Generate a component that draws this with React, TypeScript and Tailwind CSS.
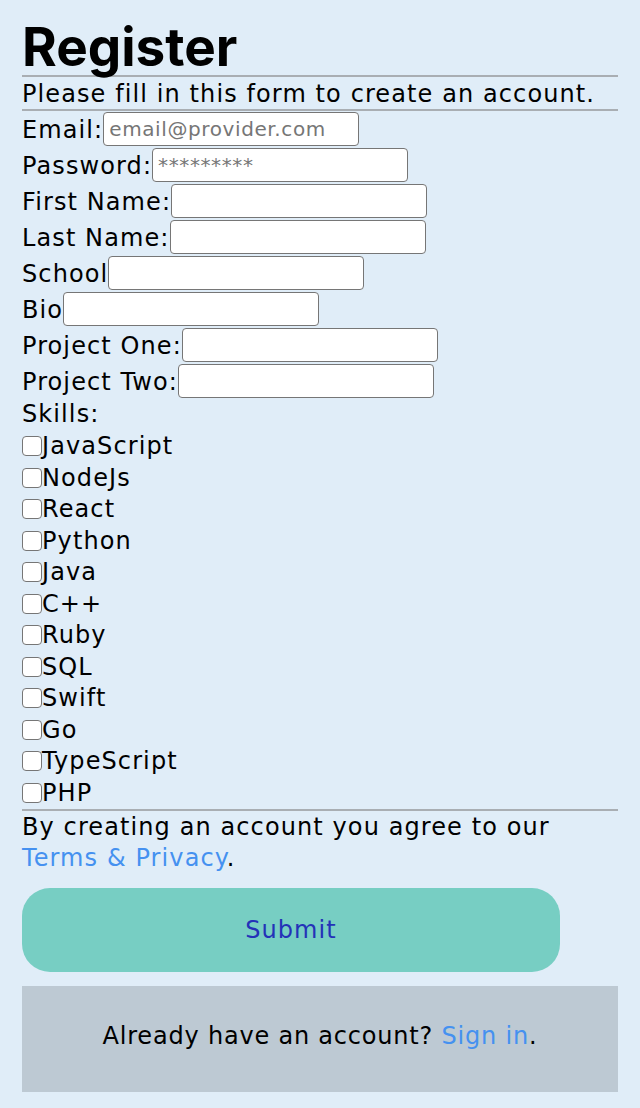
import React from 'react';

const fields: { label: string; placeholder?: string }[] = [
  { label: 'Email:', placeholder: 'email@provider.com' },
  { label: 'Password:', placeholder: '*********' },
  { label: 'First Name:' },
  { label: 'Last Name:' },
  { label: 'School' },
  { label: 'Bio' },
  { label: 'Project One:' },
  { label: 'Project Two:' },
];

const skills = ['JavaScript', 'NodeJs', 'React', 'Python', 'Java', 'C++', 'Ruby', 'SQL', 'Swift', 'Go', 'TypeScript', 'PHP'];

export default function App() {
  return (
    <div className="min-h-[1108px] bg-[#e0edf8] px-[22px] font-['DejaVu_Sans',sans-serif] text-[24px] tracking-[1.1px] text-black">
      <h1 className="pt-[20px] font-['Inter',sans-serif] text-[53px] font-bold leading-[54px] tracking-normal">Register</h1>
      <hr className="mt-[1px] border-t-2 border-[#a9aeb3]" />
      <p className="pt-[2px] leading-[30px]">Please fill in this form to create an account.</p>
      <hr className="border-t-2 border-[#a9aeb3]" />

      <div>
        {fields.map((f) => (
          <div key={f.label} className="flex h-[36px] items-center">
            <label className="pt-[2px]">{f.label}</label>
            <input
              type="text"
              placeholder={f.placeholder}
              className="h-[34px] w-[256px] rounded-[4px] border border-[#767676] bg-white px-[5px] text-[20px] tracking-[0.6px] placeholder:text-[#767676]"
            />
          </div>
        ))}
      </div>

      <div className="leading-[31.5px]">
        <div>Skills:</div>
        {skills.map((s) => (
          <label key={s} className="flex h-[31.5px] items-center">
            <input
              type="checkbox"
              className="h-[20px] w-[20px] shrink-0 appearance-none rounded-[4px] border border-[#767676] bg-white"
            />
            <span className="pt-[1px]">{s}</span>
          </label>
        ))}
      </div>

      <hr className="border-t-2 border-[#a9aeb3]" />
      <p className="pt-[1px] leading-[31px]">
        By creating an account you agree to our <a className="text-[#4591f0]">Terms &amp; Privacy</a>.
      </p>

      <button className="mt-[14px] h-[84px] w-[538px] rounded-[28px] bg-[#77cec3] text-[#2432b8]">
        Submit
      </button>

      <div className="mt-[14px] flex h-[106px] items-center justify-center bg-[#bdc9d3] pb-[6px] tracking-[0.8px]">
        <p>
          Already have an account? <a className="text-[#4591f0]">Sign in</a>.
        </p>
      </div>
    </div>
  );
}
